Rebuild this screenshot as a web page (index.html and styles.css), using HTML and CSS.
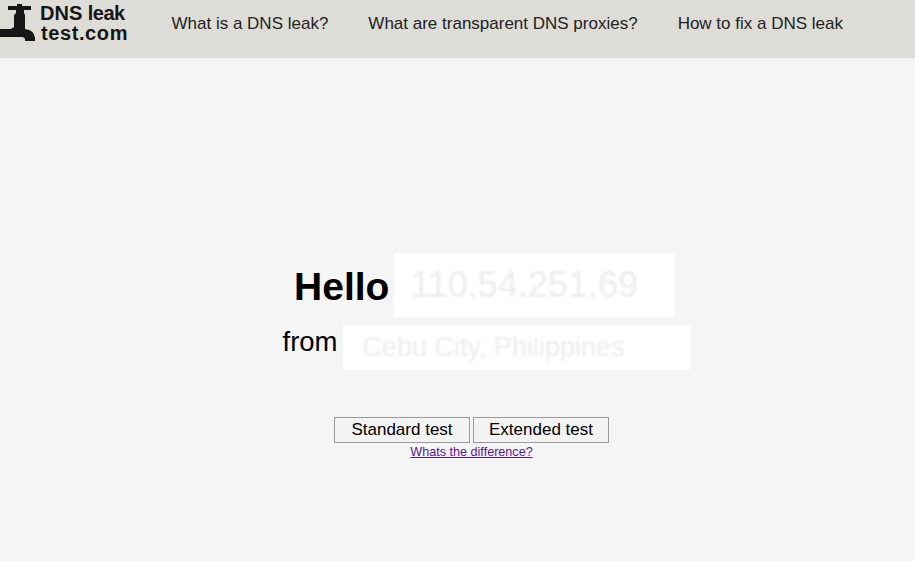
FILE: index.html
```html
<!DOCTYPE html>
<html lang="en">
<head>
  <meta charset="UTF-8" />
  <title>DNS leak test</title>
  <link rel="stylesheet" href="styles.css">
</head>
<body>
  <!-- Header -->
  <header class="top">
    <a class="logo" href="#">
      <svg class="tap" width="36" height="42" viewBox="0 0 36 42">
        <path fill="#161616" d="M8 6h9V4h5v2h9v4h-7v3l1 2v14l4 1c3 1 5 3 6 8v3H25v-2c-1-2-3-2-5-2H0v-8h11l3-2V15l2-2v-3H8z"/>
      </svg>
      <span class="logo-text"><span class="logo-top">DNS <span class="thin">leak</span></span><br><span class="logo-bottom">test.com</span></span>
    </a>
    <nav class="nav">
      <a href="#">What is a DNS leak?</a>
      <a href="#">What are transparent DNS proxies?</a>
      <a href="#">How to fix a DNS leak</a>
    </nav>
  </header>

  <!-- Hello section -->
  <main class="main">
    <div class="hello">
      <span class="hello-word">Hello</span>
      <span class="mask mask-ip"><span class="smudge">110.54.251.69</span></span>
    </div>
    <div class="from">
      <span class="from-word">from</span>
      <span class="mask mask-place"><span class="smudge">Cebu City, Philippines</span></span>
    </div>
    <div class="buttons">
      <button type="button">Standard test</button>
      <button type="button">Extended test</button>
    </div>
    <a class="diff" href="#">Whats the difference?</a>
  </main>
</body>
</html>
```

FILE: styles.css
```css
* {
  box-sizing: border-box;
}

body {
  margin: 0;
  background: #f5f5f5;
  color: #000;
  font-family: "Liberation Sans", Arial, sans-serif;
  height: 561px;
  overflow: hidden;
}

/* Header */
.top {
  height: 58px;
  background: #dddcd7;
  display: flex;
  align-items: flex-start;
}

.logo {
  display: flex;
  align-items: flex-start;
  color: #161616;
  text-decoration: none;
  width: 171.5px;
  flex: none;
}

.tap {
  flex: none;
  margin-right: 4px;
}

.logo-text {
  font-size: 20px;
  font-weight: bold;
  line-height: 20px;
  padding-top: 3px;
  white-space: nowrap;
}

.thin {
  letter-spacing: -0.5px;
}

.logo-bottom {
  letter-spacing: 0.6px;
  margin-left: 1px;
}

.nav {
  display: flex;
  gap: 40px;
  padding-top: 14px;
}

.nav a {
  color: #222;
  font-size: 17px;
  line-height: 20px;
  text-decoration: none;
}

/* Hello section */
.main {
  display: flex;
  flex-direction: column;
  align-items: center;
  padding-top: 195px;
  padding-left: 28px;
}

.hello,
.from {
  display: flex;
  align-items: center;
  gap: 5px;
}

.hello {
  font-size: 39px;
  font-weight: bold;
  height: 64px;
  margin-left: 26.5px;
}

.hello-word {
  padding-top: 3px;
}

.from {
  font-size: 27.5px;
  height: 45px;
  margin-top: 8px;
  margin-left: 30px;
}

.from-word {
  padding-bottom: 12px;
}

.mask {
  background: #fff;
  color: #ececec;
  font-weight: normal;
  display: flex;
  align-items: center;
  white-space: nowrap;
  overflow: hidden;
  height: 100%;
}

.smudge {
  filter: blur(1.2px);
}

.mask-ip {
  width: 281px;
  padding-left: 16px;
  font-size: 36px;
}

.mask-place {
  width: 348px;
  padding-left: 20px;
  font-size: 27px;
}

.buttons {
  display: flex;
  gap: 3px;
  margin-top: 47px;
}

.buttons button {
  width: 136px;
  height: 26px;
  padding: 0;
  background: #f3f3f3;
  border: 1px solid #999;
  font-family: inherit;
  font-size: 17px;
  color: #000;
}

.diff {
  color: #551a8b;
  font-size: 12.6px;
  line-height: 14px;
  margin-top: 2px;
}
```
